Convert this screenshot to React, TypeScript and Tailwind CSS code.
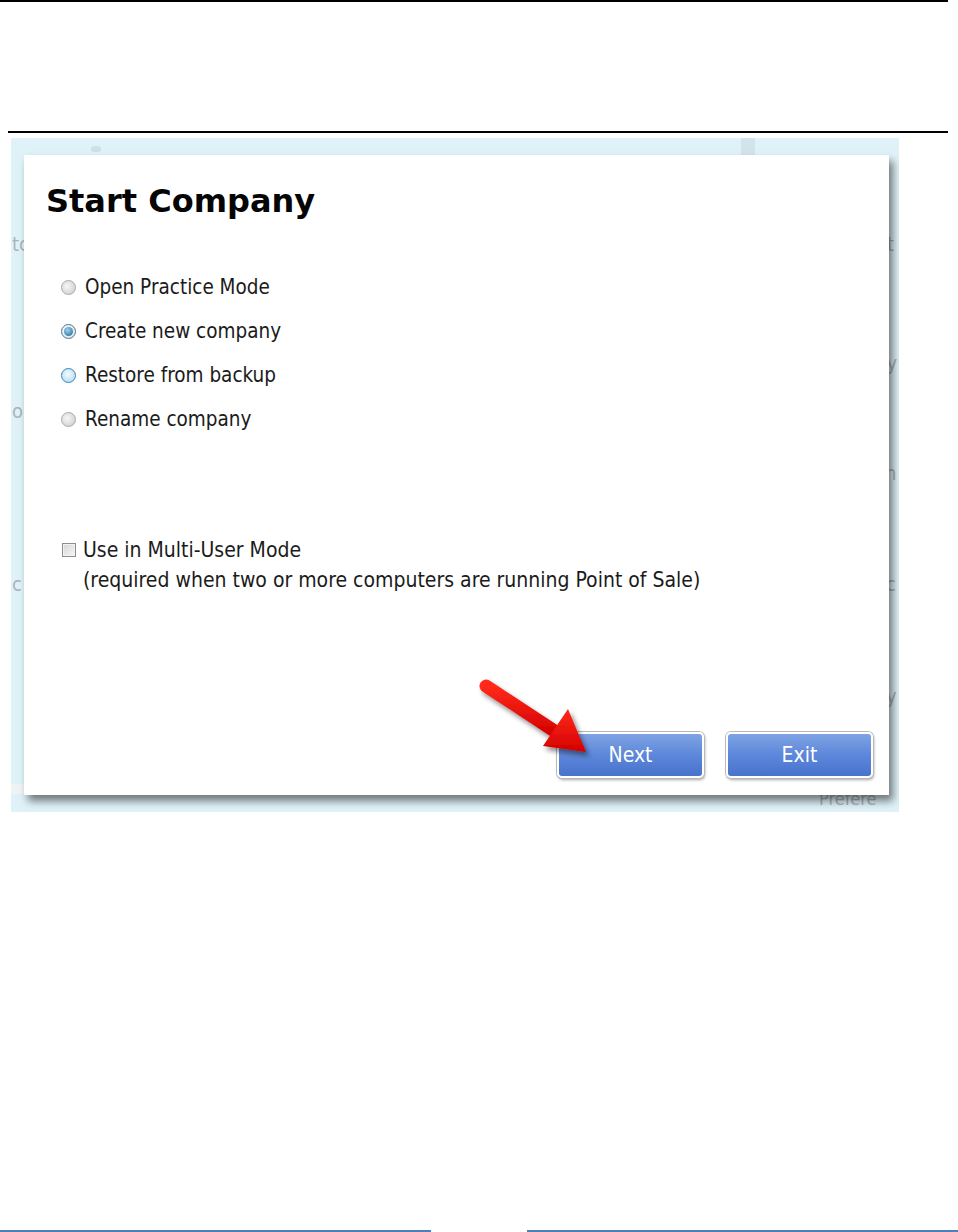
import React from 'react'

const ui = { fontFamily: '"DejaVu Sans Condensed", "DejaVu Sans", sans-serif' }

type RadioKind = 'off' | 'on' | 'hover'

function Radio({ kind }: { kind: RadioKind }) {
  if (kind === 'on') {
    return (
      <span className="flex items-center justify-center w-[15px] h-[15px] rounded-full border border-[#55758c] bg-[radial-gradient(circle_at_40%_40%,#ffffff,#d6dde3)]">
        <span className="w-[9px] h-[9px] rounded-full bg-[radial-gradient(circle_at_40%_35%,#9ad6f2,#1d5f8c)]" />
      </span>
    )
  }
  if (kind === 'hover') {
    return <span className="block w-[15px] h-[15px] rounded-full border border-[#3f82b6] bg-[radial-gradient(circle_at_45%_40%,#f2faff,#a8d6f1)]" />
  }
  return <span className="block w-[15px] h-[15px] rounded-full border border-[#a9a9a9] bg-[radial-gradient(circle_at_40%_40%,#f6f6f6,#c9c9c9)]" />
}

function Btn({ label }: { label: string }) {
  return (
    <button className="w-[147px] h-[46px] rounded-[5px] border-2 border-white shadow-[0_0_0_1px_#b9b9b9,1px_2px_3px_rgba(0,0,0,0.35)] bg-linear-to-b from-[#7fa3e3] via-[#5d87da] to-[#4873cd] text-white text-[21px] leading-none" style={ui}>
      {label}
    </button>
  )
}

const options: { label: string; kind: RadioKind }[] = [
  { label: 'Open Practice Mode', kind: 'off' },
  { label: 'Create new company', kind: 'on' },
  { label: 'Restore from backup', kind: 'hover' },
  { label: 'Rename company', kind: 'off' },
]

export default function App() {
  return (
    <div className="w-[958px] h-[1232px] bg-white flex flex-col">
      <div className="h-[2px] w-[948px] bg-black" />
      <div className="mt-[129px] ml-[8px] h-[2px] w-[940px] bg-black" />

      {/* screenshot */}
      <div className="relative mt-[5px] ml-[11px] w-[888px] h-[674px] bg-[#dff2f8] overflow-hidden">
        {/* faint window behind the dialog */}
        <div className="absolute left-[730px] top-0 w-[14px] h-[17px] bg-[#d3e3ea]" />
        <div className="absolute left-[80px] top-[8px] w-[10px] h-[6px] rounded-sm bg-[#cfdfe6]" />
        <span className="absolute left-[1px] top-[96px] text-[20px] leading-none text-[#a9b4b9]" style={ui}>tc</span>
        <span className="absolute left-[1px] top-[263px] text-[20px] leading-none text-[#a9b4b9]" style={ui}>o</span>
        <span className="absolute left-[1px] top-[436px] text-[20px] leading-none text-[#a9b4b9]" style={ui}>c</span>
        <span className="absolute left-[876px] top-[96px] text-[20px] leading-none text-[#a9b4b9]" style={ui}>t</span>
        <span className="absolute left-[864px] top-[215px] text-[20px] leading-none text-[#a9b4b9]" style={ui}>Sy</span>
        <span className="absolute left-[874px] top-[325px] text-[20px] leading-none text-[#a9b4b9]" style={ui}>h</span>
        <span className="absolute left-[875px] top-[436px] text-[20px] leading-none text-[#a9b4b9]" style={ui}>c</span>
        <span className="absolute left-[875px] top-[548px] text-[20px] leading-none text-[#a9b4b9]" style={ui}>y</span>
        <span className="absolute left-[808px] top-[652px] text-[18px] leading-none text-[#a9b4b9]" style={ui}>Prefere</span>
        <div className="absolute left-0 top-[646px] w-[20px] h-[10px] bg-[#eef3f5]" />

        {/* dialog */}
        <div className="relative ml-[13px] mt-[17px] w-[865px] h-[640px] bg-white shadow-[4px_6px_8px_rgba(0,0,0,0.5)] flex flex-col">
          <h1 className="ml-[22px] mt-[30px] text-[32px] leading-none font-bold text-[#050505]" style={{ fontFamily: '"DejaVu Sans", sans-serif' }}>
            Start Company
          </h1>

          <div className="mt-[48px] ml-[37px] flex flex-col">
            {options.map(o => (
              <div key={o.label} className="h-[44px] flex items-center gap-[9px]">
                <Radio kind={o.kind} />
                <span className="text-[20.5px] text-[#1b1b1b]" style={ui}>{o.label}</span>
              </div>
            ))}
          </div>

          <div className="mt-[94px] ml-[38px] flex gap-[7px]">
            <span className="mt-[8px] w-[14px] h-[14px] border border-[#8e8e8e] bg-linear-to-br from-[#d6d6d6] to-[#f7f7f7] shadow-[inset_0_0_0_1px_#f2f2f2]" />
            <div className="text-[21px] leading-[30px] text-[#1b1b1b]" style={ui}>
              <p>Use in Multi-User Mode</p>
              <p>(required when two or more computers are running Point of Sale)</p>
            </div>
          </div>

          <div className="mt-auto mb-[17px] mr-[16px] flex justify-end gap-[22px]">
            <Btn label="Next" />
            <Btn label="Exit" />
          </div>
        </div>

        {/* red annotation arrow */}
        <svg className="absolute left-0 top-0 pointer-events-none" width="888" height="674" viewBox="0 0 888 674">
          <defs>
            <filter id="sh" x="-20%" y="-20%" width="140%" height="140%">
              <feDropShadow dx="3" dy="4" stdDeviation="2.5" floodColor="#000" floodOpacity="0.45" />
            </filter>
            <linearGradient id="rg" x1="0" y1="0" x2="0" y2="1">
              <stop offset="0" stopColor="#ff2a1a" />
              <stop offset="1" stopColor="#d40000" />
            </linearGradient>
          </defs>
          <g filter="url(#sh)">
            <line x1="475" y1="548" x2="548" y2="596" stroke="url(#rg)" strokeWidth="13" strokeLinecap="round" />
            <polygon points="575,614 532,608 557,571" fill="url(#rg)" />
          </g>
        </svg>
      </div>

      <div className="mt-auto flex justify-between">
        <div className="h-[2px] w-[431px] bg-[#4f7fb3]" />
        <div className="h-[2px] w-[431px] bg-[#4f7fb3]" />
      </div>
    </div>
  )
}
